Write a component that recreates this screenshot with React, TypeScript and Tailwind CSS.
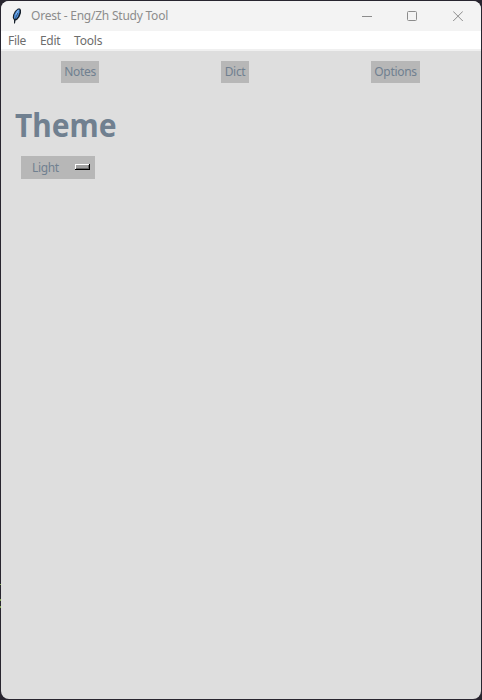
import React from "react";

const menuItems = [
  { label: "File", style: "w-8 tracking-[-0.3px]" },
  { label: "Edit", style: "w-[34px] tracking-[-0.3px]" },
  { label: "Tools", style: "tracking-[-0.2px]" },
];

const tabs = [
  { label: "Notes", cell: "w-[158px]", button: "w-[38px] tracking-[-0.3px]" },
  { label: "Dict", cell: "w-[152px]", button: "w-[28px] tracking-[-0.3px]" },
  { label: "Options", cell: "w-[169px]", button: "w-[49px] tracking-[-0.3px]" },
];

function FeatherIcon() {
  return (
    <svg className="ml-[11px] h-4 w-[10px]" viewBox="0 0 10 16">
      <path d="M6 .5h2L9 2v3L7.5 9 5 12l-1.5.5-.5 3H2V12L.8 10 1 7l2-4z" fill="#17202b" />
      <path d="M6 1.5h1.5v3L6 8.5 4 11 2 10.5 2.2 7 4 3.5z" fill="#4d8fdc" />
      <path d="M6.5 2 3.8 7" fill="none" stroke="#9bc4f2" strokeWidth=".8" />
      <path d="M5.8 5 3.2 11" fill="none" stroke="#17202b" strokeWidth=".5" />
    </svg>
  );
}

function TitleBar() {
  return (
    <header className="flex h-[30px] shrink-0 items-center bg-[#f3f3f3] text-[#8c8c8c]">
      <FeatherIcon />
      <h1 className="ml-[9px] flex-1 whitespace-nowrap text-[12px] tracking-[-0.23px]">Orest - Eng/Zh Study Tool</h1>
      <svg className="mr-[35px] h-[11px] w-[10px]" viewBox="0 0 10 11" fill="none" stroke="currentColor">
        <path d="M0 5.5h10" />
      </svg>
      <svg className="mr-[36px] h-[11px] w-[10px]" viewBox="0 0 10 11" fill="none" stroke="currentColor">
        <rect x=".5" y=".5" width="9" height="9" rx="1" />
      </svg>
      <svg className="mr-[18px] h-[11px] w-[10px]" viewBox="0 0 10 11" fill="none" stroke="currentColor">
        <path d="m.2.4 9.6 9.6m0-9.6L.2 10" />
      </svg>
    </header>
  );
}

export default function App() {
  return (
    <div className="relative h-[700px] w-[482px] bg-[#28252f] p-px font-['Noto_Sans',sans-serif]">
      <span className="absolute left-0 top-[584px] h-px w-px bg-[#82a653]" />
      <span className="absolute left-0 top-[599px] h-0.5 w-px bg-[#82a653]" />
      <span className="absolute left-0 top-[606px] h-0.5 w-px bg-[#82a653]" />
      <div className="flex h-full flex-col overflow-hidden rounded-[8px] bg-[#dedede]">
        <TitleBar />
        <nav className="flex h-5 shrink-0 items-center border-b-2 border-[#f0f0f0] bg-white pl-[7px] pt-0.5 text-[12px] text-[#6d6d6d]">
          {menuItems.map((item) => (
            <span key={item.label} className={item.style}>{item.label}</span>
          ))}
        </nav>
        <main className="text-[12px] text-[#708090]">
          <div className="flex pt-[10px]">
            {tabs.map((tab) => (
              <div key={tab.label} className={`flex justify-center ${tab.cell}`}>
                <button className={`h-[22px] bg-[#b7b7b7] text-center leading-[22px] ${tab.button}`}>{tab.label}</button>
              </div>
            ))}
          </div>
          <h2 className="ml-[14px] mt-[20px] h-[44px] origin-left scale-x-[0.935] text-[32px] font-bold leading-[44px]">Theme</h2>
          <button className="ml-5 mt-[9px] flex h-[23px] w-[74px] items-center bg-[#b7b7b7] pl-[11px] pr-[5px]">
            <span className="flex-1 text-left tracking-[-0.35px]">Light</span>
            <span className="mb-px h-[6px] w-[15px] border-b border-r border-black bg-[#a0a0a0] shadow-[inset_1px_1px_0_#fff,inset_-1px_-1px_0_#696969]" />
          </button>
        </main>
      </div>
    </div>
  );
}
